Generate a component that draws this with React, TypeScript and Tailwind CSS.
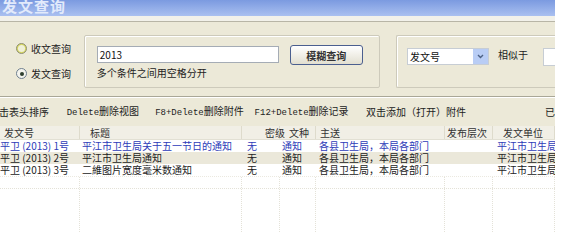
import React from 'react';

const cjk = { fontFamily: '"Noto Sans CJK SC", "Noto Sans", sans-serif' };

const columns = [
  { title: '发文号', width: 'w-[80px]', head: 'pl-[4px]', cell: 'pl-0' },
  { title: '标题', width: 'w-[162px]', head: 'pl-[10px]', cell: 'pl-[2px]' },
  { title: '密级', width: 'w-[38px]', head: 'pl-[23px]', cell: 'pl-[5px]' },
  { title: '文种', width: 'w-[36px]', head: 'pl-[9px]', cell: 'pl-[2px]' },
  { title: '主送', width: 'w-[129px]', head: 'pl-[4px]', cell: 'pl-[3px]' },
  { title: '发布层次', width: 'w-[48px]', head: 'pl-[2px]', cell: 'pl-[2px]' },
  { title: '发文单位', width: 'w-[62px]', head: 'pl-[10px]', cell: 'pl-[4px]' },
];

const rows = [
  ['平卫 (2013) 1号', '平江市卫生局关于五一节日的通知', '无', '通知', '各县卫生局，本局各部门', '', '平江市卫生局'],
  ['平卫 (2013) 2号', '平江市卫生局通知', '无', '通知', '各县卫生局，本局各部门', '', '平江市卫生局'],
  ['平卫 (2013) 3号', '二維图片宽度毫米数通知', '无', '通知', '各县卫生局，本局各部门', '', '平江市卫生局'],
];

function Radio({ label, checked, hover }: { label: string; checked?: boolean; hover?: boolean }) {
  return (
    <div className="flex items-center gap-[4px]">
      <span
        className={
          'w-[11px] h-[11px] rounded-full border flex items-center justify-center ' +
          (hover ? 'border-[#8f8f7a] bg-[#d8d860]' : 'border-[#6f7f8f] bg-[#f4f4ee]')
        }
      >
        {hover && <span className="w-[7px] h-[7px] rounded-full bg-[#f0f0d8]" />}
        {checked && <span className="w-[4px] h-[4px] rounded-full bg-[#2f3f2f]" />}
      </span>
      <span className="text-[10px] leading-none text-[#222]">{label}</span>
    </div>
  );
}

export default function App() {
  return (
    <div className="w-[564px] h-[232px] flex bg-white overflow-hidden" style={cjk}>
      <div className="w-[555px] h-full flex flex-col bg-[#ece9d8]">
        {/* title bar */}
        <div className="h-[16px] bg-gradient-to-b from-[#7b9ae0] to-[#aac0f0] overflow-hidden">
          <div className="pl-[2px] -mt-[2px] text-[15px] font-bold leading-none tracking-[1px] text-[#e2eafb]">发文查询</div>
        </div>
        <div className="h-[6px] bg-[#f2f1ea] border-b border-[#b8b5a6]" />

        {/* search area */}
        <div className="h-[75px] flex items-start border-b border-[#a9a797]">
          <div className="w-[84px] pt-[21px] pl-[16px] flex flex-col gap-[14px]">
            <Radio label="收文查询" hover />
            <Radio label="发文查询" checked />
          </div>

          <div className="mt-[13px] w-[297px] h-[53px] border border-[#cdcabb] rounded-[2px] shadow-[inset_1px_1px_0_#fff] pl-[12px] pt-[10px] flex gap-[11px]">
            <div className="flex flex-col">
              <div className="w-[182px] h-[17px] bg-white border border-[#a5acb5] text-[10px] leading-[15px] pl-[2px] text-[#111]">2013</div>
              <div className="mt-[5px] text-[10px] leading-none text-[#222]">多个条件之间用空格分开</div>
            </div>
            <div className="w-[73px] h-[20px] -mt-[1px] rounded-[3px] border border-[#4b5f8f] bg-gradient-to-b from-white to-[#e2dfd0] flex items-center justify-center text-[10px] font-bold text-[#333]">
              模糊查询
            </div>
          </div>

          <div className="ml-[16px] mt-[13px] flex-1 h-[53px] border border-r-0 border-[#cdcabb] rounded-l-[2px] shadow-[inset_1px_1px_0_#fff] pl-[10px] pt-[12px] flex items-start whitespace-nowrap">
            <div className="w-[82px] h-[17px] shrink-0 bg-white border border-[#c7cdd4] flex items-center">
              <span className="flex-1 pl-[2px] text-[10px] leading-none text-[#111]">发文号</span>
              <span className="w-[15px] h-[15px] bg-[#b9cdf5] flex items-center justify-center">
                <svg width="7" height="5" viewBox="0 0 7 5">
                  <path d="M1 1 L3.5 3.5 L6 1" fill="none" stroke="#4d6185" strokeWidth="1.4" />
                </svg>
              </span>
            </div>
            <span className="ml-[9px] mt-[2px] shrink-0 text-[10px] leading-none text-[#222]">相似于</span>
            <div className="ml-[15px] w-[12px] h-[18px] shrink-0 bg-white border border-r-0 border-[#c7cdd4]" />
          </div>
        </div>

        {/* toolbar */}
        <div className="h-[29px] border-t border-white flex items-center text-[10px] leading-none text-[#222] whitespace-nowrap">
          <span className="w-[68px] -ml-[1px]">击表头排序</span>
          <span className="w-[89px]"><span className="font-['Liberation_Mono'] text-[9px]">Delete</span>删除视图</span>
          <span className="w-[100px]"><span className="font-['Liberation_Mono'] text-[9px]">F8+Delete</span>删除附件</span>
          <span className="w-[112px]"><span className="font-['Liberation_Mono'] text-[9px]">F12+Delete</span>删除记录</span>
          <span className="w-[180px]">双击添加（打开）附件</span>
          <span>已</span>
        </div>

        {/* table */}
        <div className="flex-1 flex flex-col bg-white relative">
          <div className="h-[14px] flex bg-[#f1efe6] border-b border-[#e2e0d4] text-[10px] leading-[14px] text-[#333]">
            {columns.map((c, i) => (
              <div key={i} className={c.width + ' ' + c.head + ' border-r border-[#dedbcc] whitespace-nowrap'}>
                {c.title}
              </div>
            ))}
          </div>
          {rows.map((r, ri) => (
            <div
              key={ri}
              className={
                'h-[12px] flex text-[10px] leading-[12px] whitespace-nowrap ' +
                (ri === 0 ? 'text-[#2d3bb8]' : 'text-[#222]') +
                (ri === 1 ? ' bg-[#ebe8da]' : '')
              }
            >
              {r.map((v, ci) => (
                <div key={ci} className={columns[ci].width + ' ' + columns[ci].cell + ' overflow-hidden'}>
                  {v}
                </div>
              ))}
            </div>
          ))}
          <div className="flex-1 flex border-t border-dotted border-[#ebe9e0]">
            {columns.map((c, i) => (
              <div key={i} className={c.width + ' border-r border-dotted border-[#e4e2d8]'} />
            ))}
          </div>
          <div className="absolute left-0 right-0 top-[62px] border-t border-dotted border-[#e4e2d8]" />
        </div>
      </div>
      <div className="flex-1 bg-white" />
    </div>
  );
}
